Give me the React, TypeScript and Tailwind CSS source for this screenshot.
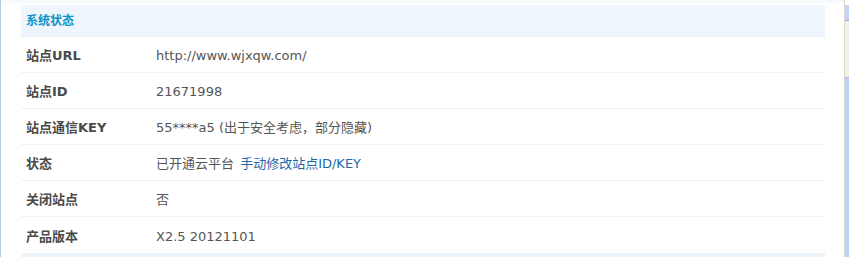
import * as React from "react";

const rows: { label: string; value: React.ReactNode }[] = [
  { label: "站点URL", value: "http://www.wjxqw.com/" },
  { label: "站点ID", value: "21671998" },
  { label: "站点通信KEY", value: "55****a5 (出于安全考虑，部分隐藏)" },
  {
    label: "状态",
    value: (
      <>
        已开通云平台 <a className="ml-[2px] text-[#2366a8]">手动修改站点ID/KEY</a>
      </>
    ),
  },
  { label: "关闭站点", value: "否" },
  { label: "产品版本", value: "X2.5 20121101" },
];

const font = "font-['DejaVu_Sans','Noto_Sans_CJK_SC',sans-serif]";

export default function App() {
  return (
    <div className={`flex h-[257px] w-[849px] overflow-hidden bg-white ${font} text-[12px]`}>
      {/* left frame edge */}
      <div className="w-px shrink-0 bg-[#b4cedd]" />

      {/* main table */}
      <div className="flex flex-1 flex-col bg-gradient-to-b from-[#f3f7fb] to-white to-[5px] pl-5 pr-[19px] pt-[5px]">
        <div className="flex h-[32px] items-center border-b border-dotted border-[#e0ebf4] bg-[#eef5fc] pl-[5px] font-bold text-[#0b94c6]">
          系统状态
        </div>
        {rows.map((row, i) => (
          <div
            key={row.label}
            className={`flex h-[36px] items-center pt-[3px] ${i < rows.length - 1 ? "border-b border-dotted border-[#e0ebf4]" : ""}`}
          >
            <div className="w-[135px] shrink-0 pl-[5px] text-[13px] font-bold text-[#4a4a4a]">{row.label}</div>
            <div className="text-[13px] text-[#555]">{row.value}</div>
          </div>
        ))}
        <div className="h-[4px] bg-[#eef3f9]" />
      </div>

      {/* scrollbar */}
      <div className="flex w-[5px] shrink-0 flex-col border-l border-[#dcd8cf] pt-[5px]">
        <div className="h-[16px] border-b border-[#8fa8de] bg-[#c3d3fa]" />
        <div className="h-[56px] bg-[#f3f1ea]" />
        <div className="flex-1 border-t border-[#9fb5e8] bg-[#bfd0f8]" />
      </div>
    </div>
  );
}
